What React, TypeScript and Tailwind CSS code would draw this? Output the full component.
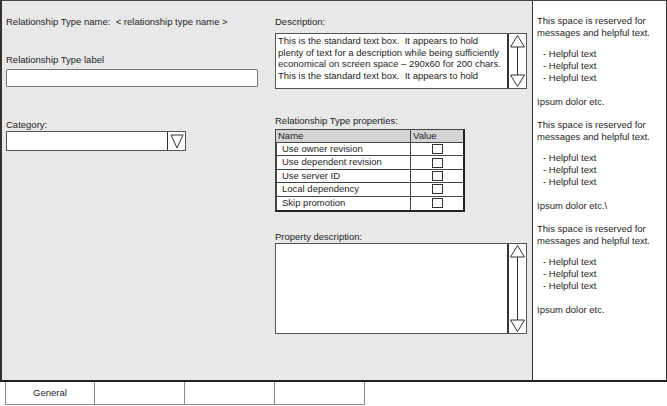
import React from "react";

const font = { fontFamily: '"Liberation Sans", Arial, sans-serif' };

function Scroll({ h }: { h: number }) {
  return (
    <div className="relative w-[19px] border-l-2 border-[#333] bg-white shrink-0" style={{ height: h }}>
      <svg width="17" height={h} className="block">
        <polygon points={`8.5,1.5 15.5,13 1.5,13`} fill="white" stroke="#333" strokeWidth="1" />
        <line x1="8.5" y1="13" x2="8.5" y2={h - 13} stroke="#333" strokeWidth="1" />
        <polygon points={`1.5,${h - 13} 15.5,${h - 13} 8.5,${h - 1.5}`} fill="white" stroke="#333" strokeWidth="1" />
      </svg>
    </div>
  );
}

const rows = ["Use owner revision", "Use dependent revision", "Use server ID", "Local dependency", "Skip promotion"];

const descLines = [
  "This is the standard text box.  It appears to hold",
  "plenty of text for a description while being sufficiently",
  "economical on screen space – 290x60 for 200 chars.",
  "This is the standard text box.  It appears to hold",
];

export default function App() {
  return (
    <div className="w-[667px] h-[406px] bg-white text-[#1e1e1e] text-[9px] leading-[12px]" style={font}>
      <div className="flex h-[382px]">
        <div className="w-[532px] h-full bg-[#e8e8e8] border-l-2 border-t border-b-2 border-l-[#333] border-t-[#444] border-b-[#222] flex pl-[4px]">
          {/* left column */}
          <div className="w-[252px] flex flex-col">
            <div className="mt-[15px] text-[9.5px] whitespace-pre">Relationship Type name:  &lt; relationship type name &gt;</div>
            <div className="mt-[26px] text-[9.5px]">Relationship Type label</div>
            <div className="mt-[3px] h-[18px] bg-white border border-[#777] rounded-[1px]" />
            <div className="mt-[32px] text-[9.5px]">Category:</div>
            <div className="w-[180px] h-[20px] bg-white border border-[#555] flex">
              <div className="flex-1" />
              <div className="w-[18px] h-full border-l border-[#333] flex items-center justify-center">
                <svg width="14" height="16" viewBox="0 0 14 16">
                  <polygon points="1,2 13,2 7,15" fill="white" stroke="#333" strokeWidth="1" />
                </svg>
              </div>
            </div>
          </div>
          {/* right column */}
          <div className="ml-[17px] w-[252px] flex flex-col">
            <div className="mt-[15px] text-[9.5px]">Description:</div>
            <div className="mt-[5px] h-[56px] bg-white border border-[#555] flex">
              <div className="flex-1 pl-[2px] pt-[1px] text-[9.5px] leading-[11.5px] overflow-hidden whitespace-pre">
                {descLines.map((l, i) => (
                  <div key={i}>{l}</div>
                ))}
              </div>
              <Scroll h={54} />
            </div>
            <div className="mt-[26px] text-[9.5px]">Relationship Type properties:</div>
            <div className="mt-[2px] w-[190px] border border-[#444] border-r-2 border-b-2 border-r-[#222] border-b-[#222] text-[9.5px]">
              <div className="flex h-[13px] bg-[#d4d4d4] border-b border-[#444]">
                <div className="w-[134px] pl-[2px] leading-[12px]">Name</div>
                <div className="flex-1 border-l border-[#444] pl-[2px] leading-[12px]">Value</div>
              </div>
              {rows.map((r, i) => (
                <div key={r} className={`flex h-[13.4px] bg-white ${i < rows.length - 1 ? "border-b border-[#444]" : ""}`}>
                  <div className="w-[134px] pl-[5px] leading-[12px] border-l border-[#444]">{r}</div>
                  <div className="flex-1 border-l border-[#444] flex items-center justify-center">
                    <span className="block w-[11px] h-[10px] border border-[#333] bg-white" />
                  </div>
                </div>
              ))}
            </div>
            <div className="mt-[19px] text-[9.5px]">Property description:</div>
            <div className="h-[91px] bg-white border border-[#555] flex">
              <div className="flex-1" />
              <Scroll h={89} />
            </div>
          </div>
        </div>
        <div className="flex-1 h-full border-l border-t border-r border-b-2 border-l-[#333] border-t-[#444] border-r-[#333] border-b-[#222] pl-[4px] pt-[14px] text-[9.5px] leading-[12px]">
          {[0, 1, 2].map((k) => (
            <div key={k} className="mb-[11px]">
              <div>This space is reserved for</div>
              <div>messages and helpful text.</div>
              <div className="mt-[9px] pl-[6px]">- Helpful text</div>
              <div className="pl-[6px]">- Helpful text</div>
              <div className="pl-[6px]">- Helpful text</div>
              <div className="mt-[12px]">{k === 1 ? "Ipsum dolor etc.\\" : "Ipsum dolor etc."}</div>
            </div>
          ))}
        </div>
      </div>
      <div className="flex pl-[5px]">
        {["General", "", "", ""].map((t, i) => (
          <div
            key={i}
            className={`h-[23px] w-[90px] border-b border-r border-[#888] ${i === 0 ? "border-l" : ""} flex items-center justify-center text-[9.5px]`}
          >
            {t}
          </div>
        ))}
      </div>
    </div>
  );
}
